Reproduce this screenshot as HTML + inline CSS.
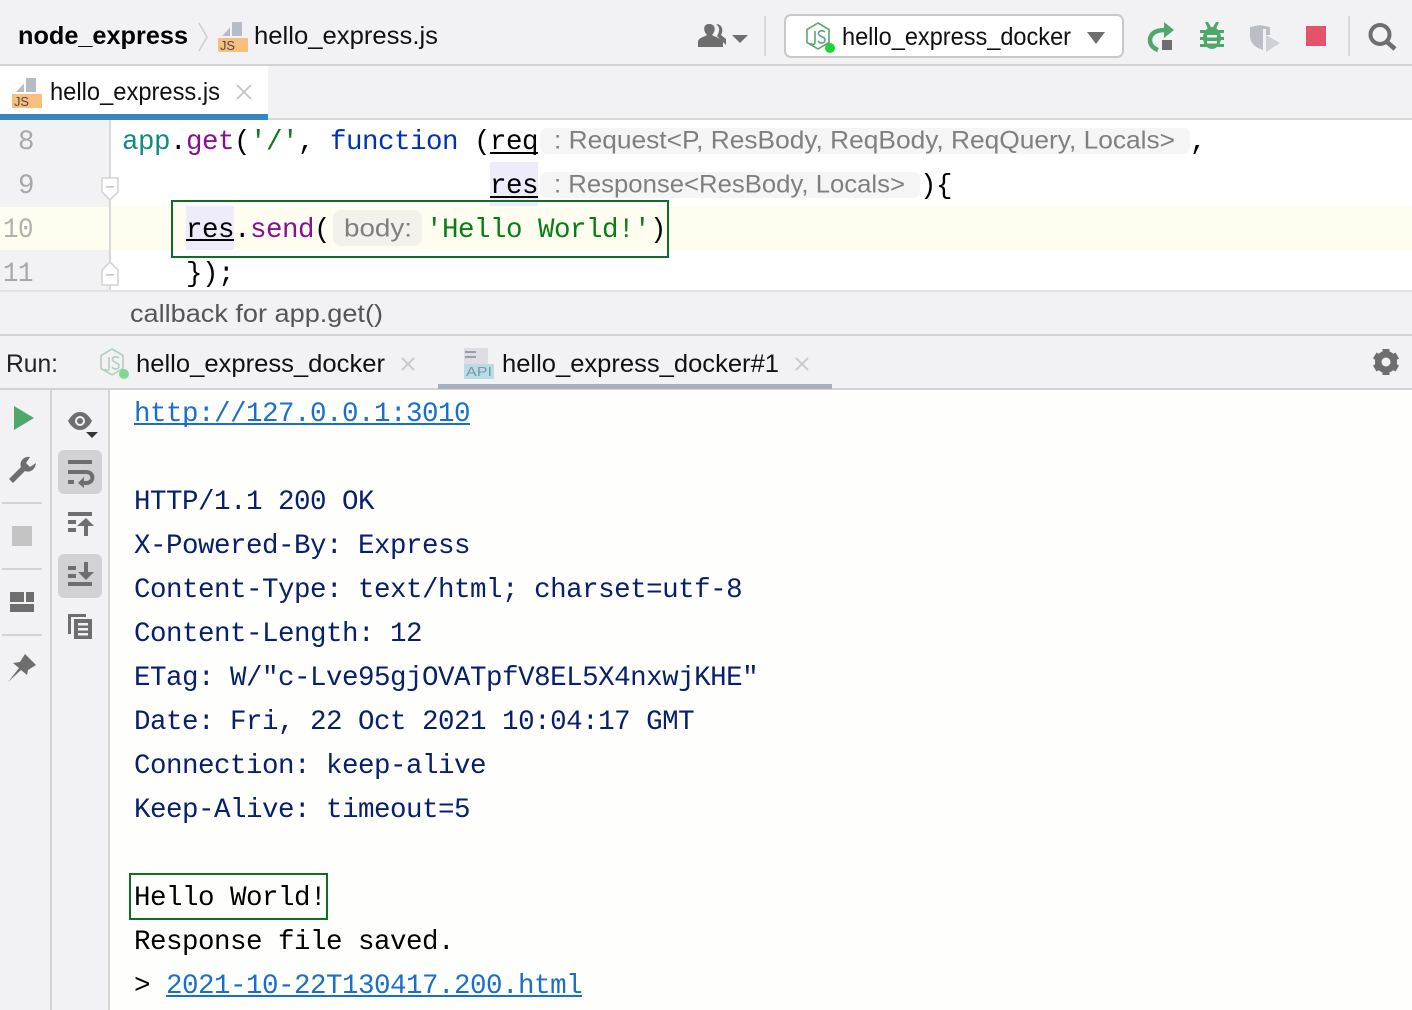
<!DOCTYPE html>
<html><head><meta charset="utf-8"><title>node_express</title>
<style>
html,body{margin:0;padding:0;width:1412px;height:1010px;overflow:hidden;background:#fefefc}
svg{display:block}
.u{font-family:"Liberation Sans",sans-serif;font-size:25px}
.m{font-family:"Liberation Mono",monospace;font-size:27.5px;letter-spacing:-.5px}
</style></head><body>
<svg width="1412" height="1010" viewBox="0 0 1412 1010" xmlns="http://www.w3.org/2000/svg">
<!-- backgrounds -->
<rect width="1412" height="1010" fill="#fefefc"/>
<rect width="1412" height="65" fill="#f2f2f5"/>
<rect y="64" width="1412" height="2" fill="#d3d3d3"/>
<rect y="66" width="1412" height="54" fill="#f2f2f5"/>
<rect y="118" width="1412" height="2" fill="#d8d8d8"/>
<rect y="66" width="268" height="48" fill="#fff"/>
<rect y="114" width="268" height="6" fill="#3a84c4"/>
<!-- editor -->
<rect y="120" width="1412" height="170" fill="#fff"/>
<rect y="120" width="110" height="170" fill="#f2f2f5"/>
<rect y="207" width="1412" height="43" fill="#fffdf0"/>
<rect x="109" y="120" width="2" height="170" fill="#d8d8d8"/>
<rect y="290" width="1412" height="2" fill="#e2e2e2"/>
<rect y="292" width="1412" height="42" fill="#f2f2f5"/>
<rect y="334" width="1412" height="2" fill="#d3d3d3"/>
<!-- run tabs -->
<rect y="336" width="1412" height="52" fill="#f2f2f5"/>
<rect y="388" width="1412" height="2" fill="#d3d3d3"/>
<rect x="438" y="384" width="394" height="5" fill="#a8aebd"/>
<!-- side toolbars -->
<rect y="390" width="110" height="620" fill="#f2f2f5"/>
<rect x="50" y="390" width="2" height="620" fill="#d3d3d3"/>
<rect x="108" y="390" width="2" height="620" fill="#d3d3d3"/>

<!-- breadcrumbs -->
<text x="18" y="44" class="u" font-weight="700" fill="#000" textLength="170" lengthAdjust="spacingAndGlyphs">node_express</text>
<path d="M199 23 L207 37 L199 51" fill="none" stroke="#cfcfcf" stroke-width="1.6"/>
<path d="M222 36 L230 27.500 V36Z M232 22 H242 V36 H232Z" fill="#b5bcc7"/>
<rect x="218" y="38" width="30" height="14" fill="#f6bf7e"/>
<text x="220" y="50" font-family="Liberation Sans,sans-serif" font-size="13" fill="#4a4a4a" textLength="15" lengthAdjust="spacingAndGlyphs">JS</text>
<text x="254" y="44" class="u" fill="#111" textLength="184" lengthAdjust="spacingAndGlyphs">hello_express.js</text>

<!-- toolbar right -->
<path d="M716 24 C722 24 724 30 721 35 L726 39 V45 L717 36 C720 31 720 27 716 24Z" fill="#6e6e6e"/>
<path d="M698 47 V42 C698 38 704 37 707 35 C703 31 703 24 709 24 C716 24 716 31 712 35 C715 37 721 38 723 42 V47Z" fill="#6e6e6e"/>
<path d="M732 35 H748 L740 43Z" fill="#6e6e6e"/>
<rect x="764" y="16" width="2" height="40" fill="#d8d8d8"/>
<rect x="785" y="15" width="338" height="42" rx="6" fill="#fff" stroke="#c9c9c9" stroke-width="2"/>
<g fill="none" stroke="#60a578" stroke-width="1.6">
<path d="M818 23 L829 29.500 V42.500 L818 49 L807 42.500 V29.500Z"/>
<path d="M815 31 V42 C815 45 812 45 811 43"/>
<path d="M825 32 C822 29.500 818 31 818.500 34 C819 37 825 36 825 40 C825 43.500 820 44 818 41"/>
</g>
<circle cx="830" cy="48" r="5" fill="#1ed438"/>
<text x="842" y="45" class="u" fill="#111" textLength="229" lengthAdjust="spacingAndGlyphs">hello_express_docker</text>
<path d="M1087 32 H1105 L1096 44Z" fill="#6e6e6e"/>
<!-- rerun -->
<path d="M1165 30 C1154 30 1150 35 1150 40 C1150 45 1153 48 1158 50" fill="none" stroke="#4fa76a" stroke-width="4.500"/>
<path d="M1164 22 L1174 30 L1164 38Z" fill="#4fa76a"/>
<rect x="1162" y="40" width="10" height="10" fill="#6e6e6e"/>
<!-- debug -->
<g fill="#4fa76a">
<ellipse cx="1212" cy="38" rx="9" ry="11"/>
<path d="M1205 22 L1208 22 L1211 27 L1208 29Z M1219 22 L1216 22 L1213 27 L1216 29Z"/>
<rect x="1200" y="30" width="24" height="3"/><rect x="1200" y="37" width="24" height="3"/><rect x="1200" y="44" width="24" height="3"/>
</g>
<rect x="1207" y="35" width="10" height="2.500" fill="#f2f2f5"/><rect x="1207" y="41" width="10" height="2.500" fill="#f2f2f5"/>
<!-- coverage -->
<path d="M1250 27 L1260 25 L1270 27 V35 H1266 V29 H1263 V50 C1257 48 1250 44 1250 36Z" fill="#bcbec5"/>
<path d="M1266 35 L1280 43 L1266 52Z" fill="#cfd0d3"/>
<rect x="1306" y="26" width="20" height="20" fill="#e3536a"/>
<rect x="1348" y="16" width="2" height="40" fill="#d8d8d8"/>
<!-- search -->
<circle cx="1380" cy="34.500" r="9.500" fill="none" stroke="#6e6e6e" stroke-width="4"/>
<path d="M1387 42 L1395 49" stroke="#6e6e6e" stroke-width="4.500"/>

<!-- tab -->
<path d="M16 92 L24 83.500 V92Z M26 78 H36 V92 H26Z" fill="#b5bcc7"/>
<rect x="12" y="94" width="30" height="14" fill="#f6bf7e"/>
<text x="14" y="106" font-family="Liberation Sans,sans-serif" font-size="13" fill="#4a4a4a" textLength="15" lengthAdjust="spacingAndGlyphs">JS</text>
<text x="50" y="100" class="u" fill="#111" textLength="170" lengthAdjust="spacingAndGlyphs">hello_express.js</text>
<path d="M237 85 L251 99 M251 85 L237 99" stroke="#c4c4c4" stroke-width="1.8"/>

<!-- line numbers -->
<g class="m" fill="#a8a8a8">
<text x="18" y="149">8</text><text x="18" y="193">9</text>
<text x="3" y="237" textLength="30" lengthAdjust="spacingAndGlyphs" fill="#b0b0b0">10</text><text x="3" y="281" textLength="30" lengthAdjust="spacingAndGlyphs">11</text>
</g>
<!-- fold markers -->
<path d="M102 178 H118 V192 L110 200 L102 192Z" fill="#fff" stroke="#d4d4d4" stroke-width="1.6"/>
<rect x="106" y="186" width="8" height="1.600" fill="#c8c8c8"/>
<path d="M102 285 V270 L110 262 L118 270 V285Z" fill="#fff" stroke="#d4d4d4" stroke-width="1.6"/>
<rect x="106" y="274" width="8" height="1.600" fill="#c8c8c8"/>

<!-- identifier highlight -->
<rect x="490" y="162" width="48" height="44" fill="#eeebfa"/>
<rect x="186" y="206" width="48" height="44" fill="#eeebfa"/>
<!-- inlay backgrounds -->
<rect x="540" y="128" width="650" height="26" rx="7" fill="#f5f5f5"/>
<rect x="540" y="172" width="380" height="26" rx="7" fill="#f5f5f5"/>
<rect x="333" y="210" width="89" height="36" rx="8" fill="#f3f1ec"/>

<!-- code -->
<g class="m">
<text y="149"><tspan x="122" fill="#118a80">app</tspan><tspan x="170" fill="#000">.</tspan><tspan x="186" fill="#871094">get</tspan><tspan x="234" fill="#000">(</tspan><tspan x="250" fill="#067d17">'/'</tspan><tspan x="298" fill="#000">,</tspan><tspan x="330" fill="#0033b3">function</tspan><tspan x="474" fill="#000">(</tspan><tspan x="490" fill="#000">req</tspan></text>
<rect x="490" y="152" width="48" height="2" fill="#000"/>
<text x="1190" y="149" fill="#000">,</text>
<text x="490" y="193" fill="#000">res</text>
<rect x="490" y="196" width="48" height="2" fill="#000"/>
<text x="920" y="193" fill="#000">){</text>
<text y="237"><tspan x="186" fill="#000">res</tspan><tspan x="234" fill="#000">.</tspan><tspan x="250" fill="#871094">send</tspan><tspan x="314" fill="#000">(</tspan><tspan x="426" fill="#067d17">'Hello World!'</tspan><tspan x="650" fill="#000">)</tspan></text>
<rect x="186" y="239" width="48" height="2" fill="#000"/>
<text x="186" y="281" fill="#000">});</text>
</g>
<!-- inlay text -->
<g class="u" fill="#7f7f7f">
<text x="554" y="148.500" textLength="621" lengthAdjust="spacingAndGlyphs">: Request&lt;P, ResBody, ReqBody, ReqQuery, Locals&gt;</text>
<text x="554" y="192.500" textLength="351" lengthAdjust="spacingAndGlyphs">: Response&lt;ResBody, Locals&gt;</text>
<text x="344" y="236.500" textLength="68" lengthAdjust="spacingAndGlyphs">body:</text>
</g>
<rect x="172" y="201" width="496" height="56" fill="none" stroke="#0b7023" stroke-width="2"/>

<!-- status -->
<text x="130" y="322" class="u" fill="#555" textLength="253" lengthAdjust="spacingAndGlyphs">callback for app.get()</text>

<!-- run tabs content -->
<text x="6" y="372" class="u" fill="#222" textLength="52" lengthAdjust="spacingAndGlyphs">Run:</text>
<g fill="none" stroke="#b5cfbd" stroke-width="1.6">
<path d="M112 349 L123 355.500 V368.500 L112 375 L101 368.500 V355.500Z"/>
<path d="M109 357 V368 C109 371 106 371 105 369"/>
<path d="M119 358 C116 355.500 112 357 112.500 360 C113 363 119 362 119 366 C119 369.500 114 370 112 367"/>
</g>
<circle cx="124" cy="374" r="5" fill="#7fd98e"/>
<text x="136" y="372" class="u" fill="#111" textLength="249" lengthAdjust="spacingAndGlyphs">hello_express_docker</text>
<path d="M402 358 L414 370 M414 358 L402 370" stroke="#c8c8c8" stroke-width="1.8"/>
<path d="M464 348 H488 V364 H464Z" fill="#dcdee3"/>
<rect x="465" y="351" width="11" height="2" fill="#9a9ea6"/><rect x="465" y="356" width="11" height="2" fill="#9a9ea6"/>
<rect x="464" y="364" width="30" height="15" fill="#b9dde6"/>
<text x="466" y="376" font-family="Liberation Sans,sans-serif" font-size="13" fill="#7f97a3" textLength="26" lengthAdjust="spacingAndGlyphs">API</text>
<text x="502" y="372" class="u" fill="#111" textLength="277" lengthAdjust="spacingAndGlyphs">hello_express_docker#1</text>
<path d="M796 358 L808 370 M808 358 L796 370" stroke="#c8c8c8" stroke-width="1.8"/>
<!-- gear -->
<circle cx="1386" cy="362" r="7.500" fill="none" stroke="#6e6e6e" stroke-width="7"/>
<g fill="#6e6e6e">
<rect x="1382.500" y="349" width="7" height="26"/>
<rect x="1382.500" y="349" width="7" height="26" transform="rotate(60 1386 362)"/>
<rect x="1382.500" y="349" width="7" height="26" transform="rotate(120 1386 362)"/>
</g>
<circle cx="1386" cy="362" r="4.500" fill="#f2f2f5"/>

<!-- left toolbar 1 -->
<path d="M14 406 L34 418 L14 430Z" fill="#4fa76a"/>
<path d="M9 479 L13 483 L25 471 C30 473 35 470 36 463 L30 467 L26 463 L30 457 C24 456 19 461 21 467Z" fill="#6e6e6e"/>
<rect x="2" y="502" width="40" height="2" fill="#d3d3d3"/>
<rect x="12" y="526" width="20" height="20" fill="#c4c4c4"/>
<rect x="2" y="568" width="40" height="2" fill="#d3d3d3"/>
<rect x="10" y="592" width="14" height="10" fill="#6e6e6e"/><rect x="26" y="592" width="8" height="10" fill="#6e6e6e"/><rect x="10" y="604" width="24" height="8" fill="#6e6e6e"/>
<rect x="2" y="634" width="40" height="2" fill="#d3d3d3"/>
<path d="M8 682 L19 668 L13 663 L20 662 L25 654 L36 665 L28 670 L27 675 L21 670Z" fill="#6e6e6e"/>

<!-- left toolbar 2 -->
<path d="M68 421 C72 414 76 412 80 412 C84 412 88 414 92 421 C88 428 84 430 80 430 C76 430 72 428 68 421Z" fill="#6e6e6e"/>
<circle cx="80" cy="421" r="5" fill="#f2f2f5"/><circle cx="80" cy="421" r="3" fill="#6e6e6e"/>
<path d="M86 432 H98 L92 438Z" fill="#333"/>
<rect x="58" y="450" width="44" height="44" rx="6" fill="#d2d2d4"/>
<g fill="#6e6e6e">
<rect x="68" y="460" width="24" height="4"/><rect x="68" y="480" width="6" height="4"/>
</g>
<path d="M68 472 H86 C94.500 472 94.500 483 86 483 H82" fill="none" stroke="#6e6e6e" stroke-width="4"/>
<path d="M84 477 L78 483 L84 488Z" fill="#6e6e6e"/>
<g fill="#6e6e6e">
<rect x="68" y="512" width="24" height="4"/><rect x="68" y="520" width="8" height="4"/><rect x="68" y="528" width="8" height="4"/>
<rect x="84" y="524" width="4" height="12"/><path d="M77 526 L86 518 L94 526Z"/>
</g>
<rect x="58" y="554" width="44" height="44" rx="6" fill="#d2d2d4"/>
<g fill="#6e6e6e">
<rect x="68" y="566" width="8" height="4"/><rect x="68" y="574" width="8" height="4"/><rect x="68" y="582" width="24" height="4"/>
<rect x="84" y="562" width="4" height="12"/><path d="M78 572 L94 572 L86 580Z"/>
<path d="M68 614 H86 V617 H71 V634 H68Z"/>
<rect x="74" y="619" width="18" height="20"/>
</g>
<g fill="#f2f2f5"><rect x="78" y="623" width="10" height="2.500"/><rect x="78" y="628" width="10" height="2.500"/><rect x="78" y="633" width="10" height="2.500"/></g>

<!-- console -->
<g class="m" fill="#081f6b">
<text x="134" y="421" fill="#1a6fc9">http://127.0.0.1:3010</text>
<text x="134" y="509">HTTP/1.1 200 OK</text>
<text x="134" y="553">X-Powered-By: Express</text>
<text x="134" y="597">Content-Type: text/html; charset=utf-8</text>
<text x="134" y="641">Content-Length: 12</text>
<text x="134" y="685">ETag: W/"c-Lve95gjOVATpfV8EL5X4nxwjKHE"</text>
<text x="134" y="729">Date: Fri, 22 Oct 2021 10:04:17 GMT</text>
<text x="134" y="773">Connection: keep-alive</text>
<text x="134" y="817">Keep-Alive: timeout=5</text>
<text x="134" y="905" fill="#000">Hello World!</text>
<text x="134" y="949" fill="#000">Response file saved.</text>
<text x="134" y="993" fill="#000">&gt;</text>
<text x="166" y="993" fill="#1a6fc9">2021-10-22T130417.200.html</text>
</g>
<rect x="134" y="423" width="336" height="2" fill="#1a6fc9"/>
<rect x="166" y="995" width="416" height="2" fill="#1a6fc9"/>
<rect x="130" y="874" width="197" height="45" fill="none" stroke="#0b7023" stroke-width="2"/>
</svg>
</body></html>
